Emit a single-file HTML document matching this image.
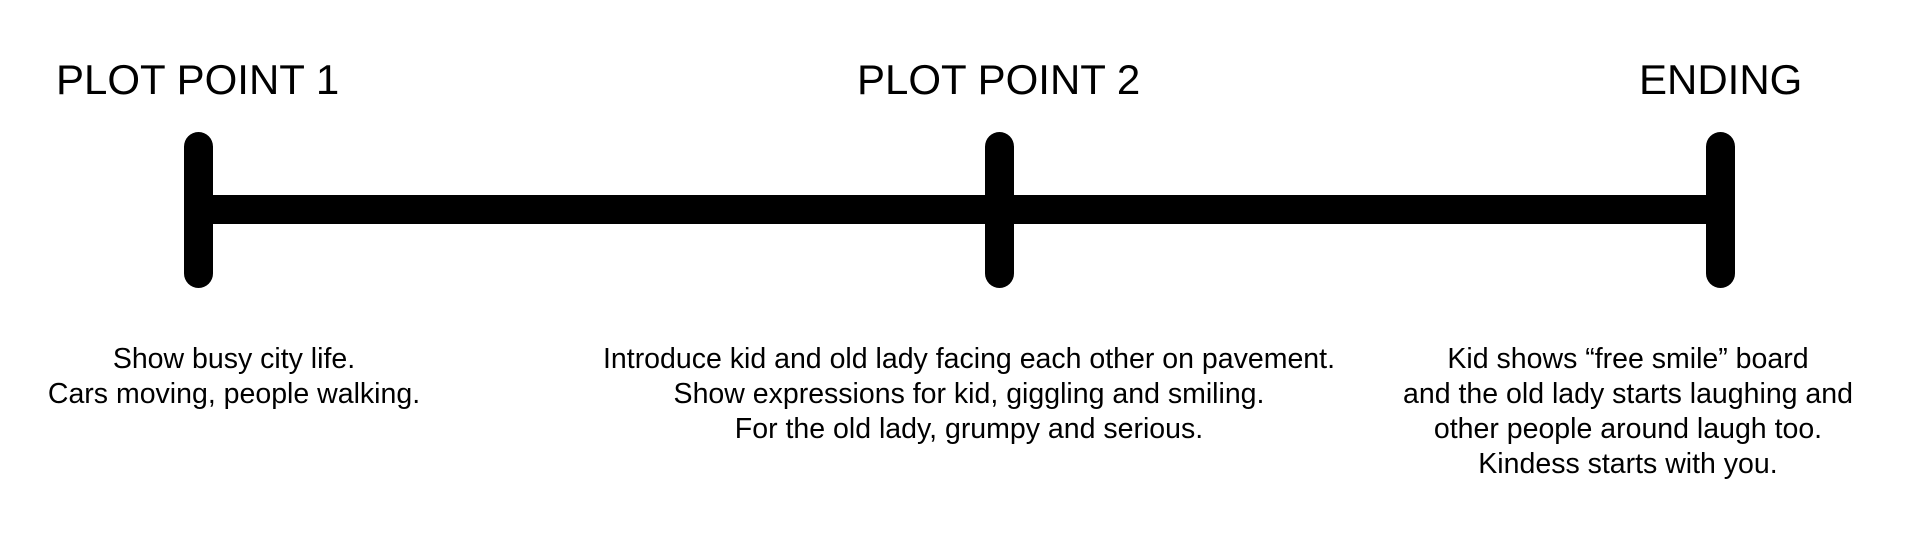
<!DOCTYPE html>
<html><head><style>
body{margin:0;width:1920px;height:534px;background:#fff;position:relative;overflow:hidden;font-family:"Liberation Sans",sans-serif;color:#000}
.t{position:absolute;font-size:42px;line-height:1;white-space:nowrap}
.b{position:absolute;background:#000}
.v{width:29px;top:132px;height:156px;border-radius:15px}
.p{position:absolute;font-size:28.5px;line-height:35px;text-align:center;white-space:nowrap;transform:translateX(-50%)}
</style></head><body>
<div class="t" style="left:56px;top:59px">PLOT POINT 1</div>
<div class="t" style="left:857px;top:59px">PLOT POINT 2</div>
<div class="t" style="left:1639px;top:59px">ENDING</div>
<div class="b" style="left:198px;top:195px;width:1537px;height:29px"></div>
<div class="b v" style="left:184px"></div>
<div class="b v" style="left:985px"></div>
<div class="b v" style="left:1706px"></div>
<div class="p" style="left:234px;top:342px">Show busy city life.<br>Cars moving, people walking.</div>
<div class="p" style="left:969px;top:342px">Introduce kid and old lady facing each other on pavement.<br>Show expressions for kid, giggling and smiling.<br>For the old lady, grumpy and serious.</div>
<div class="p" style="left:1628px;top:342px">Kid shows “free smile” board<br>and the old lady starts laughing and<br>other people around laugh too.<br>Kindess starts with you.</div>
</body></html>
